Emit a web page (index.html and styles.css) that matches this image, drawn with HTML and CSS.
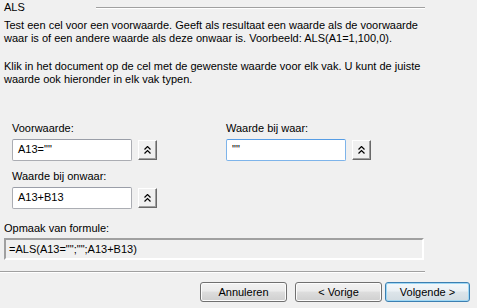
FILE: index.html
```html
<!DOCTYPE html>
<html lang="nl">
<head>
    <meta charset="UTF-8">
    <title>ALS</title>
    <link rel="stylesheet" href="styles.css">
</head>
<body>
    <div class="dialog">
        <div class="title-row">
            <span class="title">ALS</span>
            <span class="rule"></span>
        </div>

        <p class="intro">Test een cel voor een voorwaarde. Geeft als resultaat een waarde als de voorwaarde waar is of een andere waarde als deze onwaar is. Voorbeeld: ALS(A1=1,100,0).</p>
        <p class="intro intro-second">Klik in het document op de cel met de gewenste waarde voor elk vak. U kunt de juiste waarde ook hieronder in elk vak typen.</p>

        <div class="fields">
            <div class="field">
                <label class="field-label">Voorwaarde:</label>
                <div class="field-row">
                    <div class="textbox">A13=""</div>
                    <div class="shrink-btn">
                        <svg width="7" height="8" viewBox="0 0 7 8"><path d="M0.5 3.5L3.5 0.5L6.5 3.5M0.5 7.5L3.5 4.5L6.5 7.5" fill="none" stroke="#000" stroke-width="1.2"/></svg>
                    </div>
                </div>
            </div>
            <div class="field">
                <label class="field-label">Waarde bij waar:</label>
                <div class="field-row">
                    <div class="textbox textbox-focus">""</div>
                    <div class="shrink-btn">
                        <svg width="7" height="8" viewBox="0 0 7 8"><path d="M0.5 3.5L3.5 0.5L6.5 3.5M0.5 7.5L3.5 4.5L6.5 7.5" fill="none" stroke="#000" stroke-width="1.2"/></svg>
                    </div>
                </div>
            </div>
            <div class="field">
                <label class="field-label">Waarde bij onwaar:</label>
                <div class="field-row">
                    <div class="textbox">A13+B13</div>
                    <div class="shrink-btn">
                        <svg width="7" height="8" viewBox="0 0 7 8"><path d="M0.5 3.5L3.5 0.5L6.5 3.5M0.5 7.5L3.5 4.5L6.5 7.5" fill="none" stroke="#000" stroke-width="1.2"/></svg>
                    </div>
                </div>
            </div>
        </div>

        <div class="formula-label">Opmaak van formule:</div>
        <div class="formula">=ALS(A13="";"";A13+B13)</div>

        <div class="separator"></div>

        <div class="buttons">
            <div class="btn">Annuleren</div>
            <div class="btn btn-prev">&lt; Vorige</div>
            <div class="btn btn-default">Volgende &gt;</div>
        </div>
    </div>
</body>
</html>
```

FILE: styles.css
```css
* {
    margin: 0;
    padding: 0;
    box-sizing: border-box;
}

body {
    background-color: #f0f0f0;
    color: #000;
    font-family: "Liberation Sans", Arial, sans-serif;
    font-size: 11px;
    line-height: 13px;
    width: 477px;
    height: 308px;
    overflow: hidden;
}

.dialog {
    width: 425px;
    padding: 1px 0 0 4px;
}

.title-row {
    display: flex;
    align-items: center;
    height: 13px;
}

.title {
    width: 92px;
}

.rule {
    flex: 1;
    height: 1px;
    background-color: #a0a0a0;
    border-bottom: 1px solid #fff;
    box-sizing: content-box;
}

.intro {
    margin-top: 5px;
    margin-right: -4px;
}

.intro-second {
    margin-top: 15px;
}

.fields {
    display: grid;
    grid-template-columns: 214px 1fr;
    row-gap: 9px;
    margin-top: 36px;
    padding-left: 8px;
}

.field-label {
    display: block;
    height: 13px;
    margin-bottom: 4px;
}

.field-row {
    display: flex;
    align-items: center;
    gap: 6px;
}

.textbox {
    width: 120px;
    height: 22px;
    background-color: #fff;
    border: 1px solid #abadb3;
    border-top-color: #9a9ea8;
    border-radius: 2px;
    padding: 3px 5px 0 5px;
}

.textbox-focus {
    border-color: #7eb4ea;
    border-top-color: #569de5;
}

.shrink-btn {
    width: 19px;
    height: 20px;
    display: flex;
    justify-content: center;
    align-items: center;
    background-color: #f0f0f0;
    border-top: 1px solid #fff;
    border-left: 1px solid #fff;
    border-right: 1px solid #696969;
    border-bottom: 1px solid #696969;
    box-shadow: inset -1px -1px 0 #a0a0a0;
}

.formula-label {
    margin-top: 13px;
    height: 13px;
}

.formula {
    margin-top: 3px;
    width: 420px;
    height: 22px;
    padding: 3px 3px 0 3px;
    border-top: 2px solid #a0a0a0;
    border-left: 2px solid #a0a0a0;
    border-right: 2px solid #fff;
    border-bottom: 2px solid #fff;
}

.separator {
    margin: 11px 0 0 -4px;
    width: 425px;
    height: 1px;
    background-color: #a0a0a0;
    border-bottom: 1px solid #fff;
    box-sizing: content-box;
}

.buttons {
    display: flex;
    justify-content: flex-end;
    gap: 8px;
    margin-top: 9px;
    margin-right: -45px;
}

.btn {
    width: 87px;
    height: 20px;
    display: flex;
    justify-content: center;
    align-items: center;
    border: 1px solid #707070;
    border-radius: 3px;
    background: linear-gradient(#f2f2f2 0%, #ebebeb 45%, #dddddd 50%, #cfcfcf 100%);
    box-shadow: inset 0 0 0 1px #fcfcfc;
}

.btn-prev {
    margin-right: -5px;
}

.btn-default {
    width: 85px;
    border-color: #3c7fb1;
    box-shadow: inset 0 0 0 1px #9fd8f5;
    background: linear-gradient(#f4f8fb 0%, #eaf0f4 45%, #dde5ea 50%, #d2dce2 100%);
}
```
